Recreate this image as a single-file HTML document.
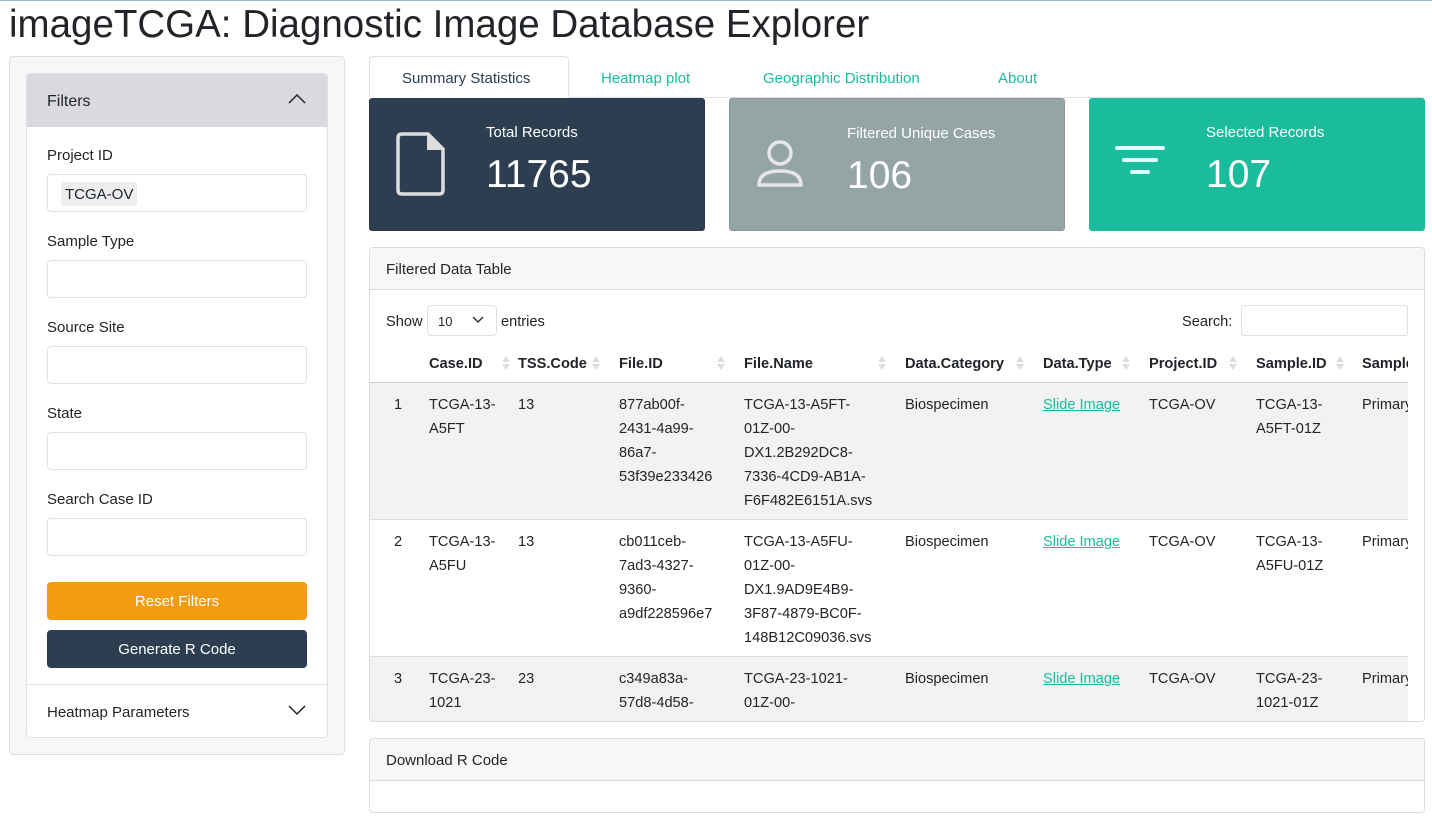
<!DOCTYPE html>
<html><head><meta charset="utf-8"><style>
*{box-sizing:border-box;margin:0;padding:0}
body{width:1432px;height:835px;overflow:hidden;background:#fff;font-family:"Liberation Sans",sans-serif;color:#212529;position:relative;font-size:15px}
.a{position:absolute}
.lbl{position:absolute;left:47px;font-size:15px;line-height:18px;margin-top:2px}
.inp{position:absolute;left:47px;width:260px;height:38px;border:1px solid #dee2e6;border-radius:4px;background:#fff}
.btn{position:absolute;left:47px;width:260px;height:38px;border-radius:4px;color:#fff;text-align:center;line-height:40px;font-size:15px}
.tab{position:absolute;top:70px;color:#18bc9c;font-size:15px;line-height:18px}
.box{position:absolute;top:98px;width:336px;height:133px;border-radius:3px;color:#fff}
.box .h{position:absolute;left:117px;top:26px;font-size:15px}
.box .n{position:absolute;left:117px;top:53px;font-size:39px;line-height:48px}
.panel{position:absolute;left:369px;width:1056px;border:1px solid #dcdcdc;border-radius:4px;overflow:hidden}
.ph{height:42px;background:#f7f7f7;border-bottom:1px solid #dcdcdc;padding-left:16px;line-height:43px;font-size:15px}
.c{position:absolute;font-size:14.6px;line-height:24px;white-space:nowrap;margin-top:2px}
.hd{font-weight:bold;top:350px}
.sort{position:absolute;top:355px;width:8px;height:16px}
</style></head><body>
<div class="a" style="left:0;top:0;width:1432px;height:1px;background:#9bb7d8"></div>
<div class="a" style="left:9px;top:2px;font-size:38.5px;line-height:46px;color:#212529">imageTCGA: Diagnostic Image Database Explorer</div>

<div class="a" style="left:9px;top:56px;width:336px;height:699px;background:#f7f7f7;border:1px solid #e0e0e0;border-radius:4px"></div>
<div class="a" style="left:26px;top:73px;width:302px;height:665px;background:#fff;border:1px solid #dee2e6;border-radius:4px;overflow:hidden">
 <div style="height:53px;background:#d9dadd;padding-left:20px;line-height:55px;font-size:16px">Filters</div>
 <svg class="a" style="left:261px;top:19px" width="18" height="12" viewBox="0 0 18 12"><path d="M1 10 L9 2 L17 10" fill="none" stroke="#222" stroke-width="1.5"/></svg>
 <div class="a" style="left:0;top:610px;width:302px;height:1px;background:#dee2e6"></div>
 <div class="a" style="left:20px;top:630px;font-size:15px">Heatmap Parameters</div>
 <svg class="a" style="left:261px;top:630px" width="18" height="12" viewBox="0 0 18 12"><path d="M1 2 L9 10 L17 2" fill="none" stroke="#222" stroke-width="1.5"/></svg>
</div>
<div class="lbl" style="top:145px">Project ID</div>
<div class="inp" style="top:174px"><div class="a" style="left:13px;top:7px;height:24px;padding:0 4px;background:#eceeef;border-radius:3px;line-height:26px">TCGA-OV</div></div>
<div class="lbl" style="top:231px">Sample Type</div><div class="inp" style="top:260px"></div>
<div class="lbl" style="top:317px">Source Site</div><div class="inp" style="top:346px"></div>
<div class="lbl" style="top:403px">State</div><div class="inp" style="top:432px"></div>
<div class="lbl" style="top:489px">Search Case ID</div><div class="inp" style="top:518px"></div>
<div class="btn" style="top:582px;background:#f39c12">Reset Filters</div>
<div class="btn" style="top:630px;background:#2c3e50">Generate R Code</div>

<div class="a" style="left:369px;top:56px;width:200px;height:42px;border:1px solid #dee2e6;border-bottom:none;border-radius:4px 4px 0 0;background:#fff"></div>
<div class="a" style="left:568px;top:97px;width:856px;height:1px;background:#dee2e6"></div>
<div class="tab" style="left:402px;color:#2c3e50">Summary Statistics</div>
<div class="tab" style="left:601px">Heatmap plot</div>
<div class="tab" style="left:763px">Geographic Distribution</div>
<div class="tab" style="left:998px">About</div>

<div class="box" style="left:369px;background:#2c3e50">
 <svg class="a" style="left:27px;top:34px" width="50" height="64" viewBox="0 0 50 64"><path d="M6 2 H32 L47 17 V58 Q47 62 43 62 H6 Q2 62 2 58 V6 Q2 2 6 2 Z" fill="none" stroke="#ddd" stroke-width="3.5"/><path d="M31 3 V18 H46 Z" fill="#ddd"/></svg>
 <div class="h">Total Records</div><div class="n">11765</div></div>
<div class="box" style="left:729px;background:#95a5a6;border:1px solid #8a9a9b">
 <svg class="a" style="left:26px;top:40px" width="50" height="50" viewBox="0 0 50 50"><circle cx="24" cy="14" r="11" fill="none" stroke="#e6e6e6" stroke-width="3.5"/><path d="M3 46 Q3 32 24 32 Q45 32 45 46 Z" fill="none" stroke="#e6e6e6" stroke-width="3.5" stroke-linejoin="round"/></svg>
 <div class="h">Filtered Unique Cases</div><div class="n">106</div></div>
<div class="box" style="left:1089px;background:#1abc9c">
 <svg class="a" style="left:26px;top:48px" width="50" height="34" viewBox="0 0 50 34"><path d="M2 2 H48 M9 14 H41 M17 26 H33" stroke="#dff" stroke-width="4" stroke-linecap="round"/></svg>
 <div class="h">Selected Records</div><div class="n">107</div></div>

<div class="panel" style="top:247px;height:475px"><div class="ph">Filtered Data Table</div>
 <div class="a" style="left:0;top:135px;width:1038px;height:137px;background:#f2f2f2"></div>
 <div class="a" style="left:0;top:272px;width:1038px;height:137px;background:#fff"></div>
 <div class="a" style="left:0;top:409px;width:1038px;height:80px;background:#f2f2f2"></div>
 <div class="a" style="left:0;top:134px;width:1038px;height:1px;background:#ccc"></div>
 <div class="a" style="left:0;top:271px;width:1038px;height:1px;background:#ddd"></div>
 <div class="a" style="left:0;top:408px;width:1038px;height:1px;background:#ddd"></div>
</div>
<div class="c" style="left:386px;top:308px">Show</div>
<div class="a" style="left:427px;top:305px;width:70px;height:31px;border:1px solid #dee2e6;border-radius:4px;font-size:13px;line-height:31px;padding-left:10px">10<svg class="a" style="left:44px;top:10px" width="12" height="8" viewBox="0 0 12 8"><path d="M1 1 L6 6 L11 1" fill="none" stroke="#333" stroke-width="1.5"/></svg></div>
<div class="c" style="left:501px;top:308px">entries</div>
<div class="c" style="left:1182px;top:308px">Search:</div>
<div class="a" style="left:1241px;top:305px;width:167px;height:31px;border:1px solid #dee2e6;border-radius:3px"></div>

<div class="c hd" style="left:429px">Case.ID</div><div class="c hd" style="left:518px">TSS.Code</div><div class="c hd" style="left:619px">File.ID</div><div class="c hd" style="left:744px">File.Name</div><div class="c hd" style="left:905px">Data.Category</div><div class="c hd" style="left:1043px">Data.Type</div><div class="c hd" style="left:1149px">Project.ID</div><div class="c hd" style="left:1256px">Sample.ID</div>
<div class="a" style="left:1362px;top:352px;width:46px;overflow:hidden;font-weight:bold;line-height:24px;font-size:14.6px">Sample</div>
<svg class="sort" style="left:502px" viewBox="0 0 8 16"><path d="M4 1 L8 7 H0Z M4 15 L8 9 H0Z" fill="#ddd"/></svg>
<svg class="sort" style="left:592px" viewBox="0 0 8 16"><path d="M4 1 L8 7 H0Z M4 15 L8 9 H0Z" fill="#ddd"/></svg>
<svg class="sort" style="left:717px" viewBox="0 0 8 16"><path d="M4 1 L8 7 H0Z M4 15 L8 9 H0Z" fill="#ddd"/></svg>
<svg class="sort" style="left:878px" viewBox="0 0 8 16"><path d="M4 1 L8 7 H0Z M4 15 L8 9 H0Z" fill="#ddd"/></svg>
<svg class="sort" style="left:1016px" viewBox="0 0 8 16"><path d="M4 1 L8 7 H0Z M4 15 L8 9 H0Z" fill="#ddd"/></svg>
<svg class="sort" style="left:1122px" viewBox="0 0 8 16"><path d="M4 1 L8 7 H0Z M4 15 L8 9 H0Z" fill="#ddd"/></svg>
<svg class="sort" style="left:1229px" viewBox="0 0 8 16"><path d="M4 1 L8 7 H0Z M4 15 L8 9 H0Z" fill="#ddd"/></svg>
<svg class="sort" style="left:1336px" viewBox="0 0 8 16"><path d="M4 1 L8 7 H0Z M4 15 L8 9 H0Z" fill="#ddd"/></svg>

<div class="a" style="left:370px;top:382px;width:1038px;height:338px;overflow:hidden">
 <div class="c" style="left:24px;top:9px">1</div><div class="c" style="left:59px;top:9px">TCGA-13-<br>A5FT</div><div class="c" style="left:148px;top:9px">13</div><div class="c" style="left:249px;top:9px">877ab00f-<br>2431-4a99-<br>86a7-<br>53f39e233426</div><div class="c" style="left:374px;top:9px">TCGA-13-A5FT-<br>01Z-00-<br>DX1.2B292DC8-<br>7336-4CD9-AB1A-<br>F6F482E6151A.svs</div><div class="c" style="left:535px;top:9px">Biospecimen</div><div class="c" style="left:673px;top:9px;color:#18bc9c;text-decoration:underline">Slide Image</div><div class="c" style="left:779px;top:9px">TCGA-OV</div><div class="c" style="left:886px;top:9px">TCGA-13-<br>A5FT-01Z</div><div class="c" style="left:992px;top:9px">Primary</div>
 <div class="c" style="left:24px;top:146px">2</div><div class="c" style="left:59px;top:146px">TCGA-13-<br>A5FU</div><div class="c" style="left:148px;top:146px">13</div><div class="c" style="left:249px;top:146px">cb011ceb-<br>7ad3-4327-<br>9360-<br>a9df228596e7</div><div class="c" style="left:374px;top:146px">TCGA-13-A5FU-<br>01Z-00-<br>DX1.9AD9E4B9-<br>3F87-4879-BC0F-<br>148B12C09036.svs</div><div class="c" style="left:535px;top:146px">Biospecimen</div><div class="c" style="left:673px;top:146px;color:#18bc9c;text-decoration:underline">Slide Image</div><div class="c" style="left:779px;top:146px">TCGA-OV</div><div class="c" style="left:886px;top:146px">TCGA-13-<br>A5FU-01Z</div><div class="c" style="left:992px;top:146px">Primary</div>
 <div class="c" style="left:24px;top:283px">3</div><div class="c" style="left:59px;top:283px">TCGA-23-<br>1021</div><div class="c" style="left:148px;top:283px">23</div><div class="c" style="left:249px;top:283px">c349a83a-<br>57d8-4d58-<br>8f31-</div><div class="c" style="left:374px;top:283px">TCGA-23-1021-<br>01Z-00-<br>DX1.F3FC381B-</div><div class="c" style="left:535px;top:283px">Biospecimen</div><div class="c" style="left:673px;top:283px;color:#18bc9c;text-decoration:underline">Slide Image</div><div class="c" style="left:779px;top:283px">TCGA-OV</div><div class="c" style="left:886px;top:283px">TCGA-23-<br>1021-01Z</div><div class="c" style="left:992px;top:283px">Primary</div>
</div>

<div class="panel" style="top:738px;height:75px"><div class="ph">Download R Code</div></div>
</body></html>
